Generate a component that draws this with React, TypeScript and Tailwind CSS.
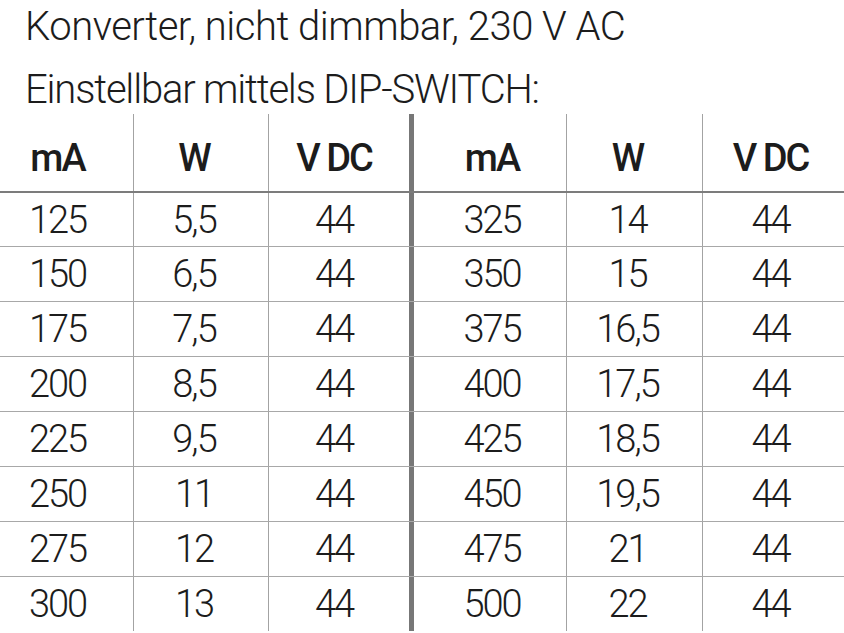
import React from 'react';

const rows: [string, string, string, string, string, string][] = [
  ['125', '5,5', '44', '325', '14', '44'],
  ['150', '6,5', '44', '350', '15', '44'],
  ['175', '7,5', '44', '375', '16,5', '44'],
  ['200', '8,5', '44', '400', '17,5', '44'],
  ['225', '9,5', '44', '425', '18,5', '44'],
  ['250', '11', '44', '450', '19,5', '44'],
  ['275', '12', '44', '475', '21', '44'],
  ['300', '13', '44', '500', '22', '44'],
];

const gridCols = 'grid grid-cols-[133px_135px_141px_5px_152px_136px_142px]';

const Cells: React.FC<{ values: string[]; head?: boolean }> = ({ values, head }) => {
  const base = head
    ? 'flex items-center justify-center pt-[11px] font-medium tracking-[-2px]'
    : 'flex items-center justify-center font-light tracking-[-2px]';
  return (
    <>
      <div className={`${base} pr-[18px]`}>{values[0]}</div>
      <div className={`${base} border-l border-[#a3a3a3] pr-[14px]`}>{values[1]}</div>
      <div className={`${base} pr-[10px] border-l border-[#a3a3a3]`}>{values[2]}</div>
      <div className="bg-[#777777]" />
      <div className={`${base} pl-[4px]`}>{values[3]}</div>
      <div className={`${base} border-l border-[#a3a3a3] pr-[14px]`}>{values[4]}</div>
      <div className={`${base} border-l border-[#a3a3a3] pr-[6px]`}>{values[5]}</div>
    </>
  );
};

export default function App() {
  return (
    <div
      className="w-[844px] h-[633px] overflow-hidden bg-white text-[#1c1c1c]"
      style={{ fontFamily: 'Roboto, "Noto Sans", sans-serif' }}
    >
      <div className="flex flex-col gap-[17px] pt-[4px] pb-[1px] pl-[25px] text-[40px] font-light leading-[46px]">
        <div className="tracking-[-0.5px]">Konverter, nicht dimmbar, 230 V AC</div>
        <div className="tracking-[-1.2px]">Einstellbar mittels DIP-SWITCH:</div>
      </div>

      <div className="text-[38px] leading-none">
        <div className={`${gridCols} h-[77px]`}>
          <Cells values={['mA', 'W', 'V DC', 'mA', 'W', 'V DC']} head />
        </div>
        {rows.map((r, i) => (
          <div
            key={r[0]}
            className={`${gridCols} h-[55px] ${
              i === 0 ? 'border-t-2 border-[#7c7c7c]' : 'border-t border-[#a8a8a8]'
            }`}
          >
            <Cells values={r} />
          </div>
        ))}
      </div>
    </div>
  );
}
